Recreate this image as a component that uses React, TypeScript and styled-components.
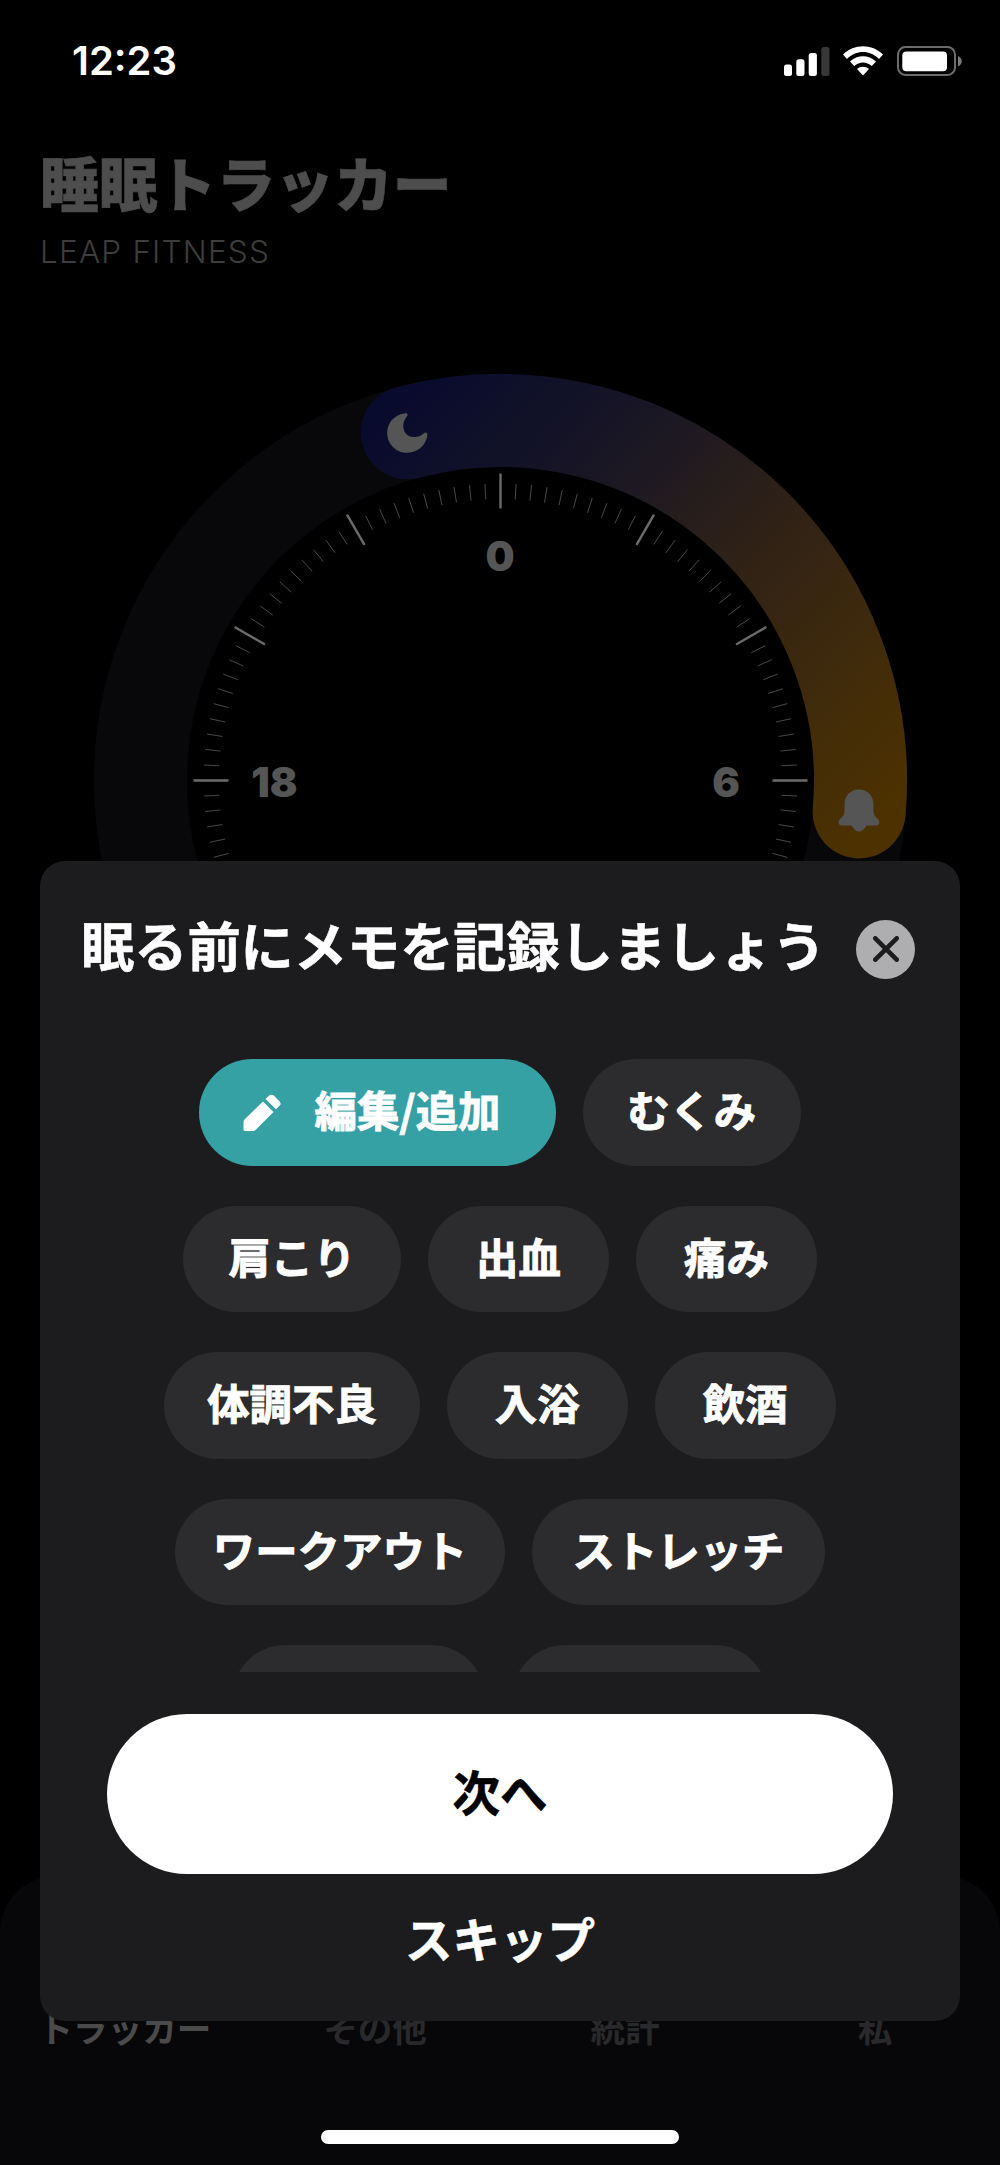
import React from "react";
import styled, { createGlobalStyle } from "styled-components";

const jp = `"Noto Sans CJK JP", "Noto Sans", sans-serif`;
const latin = `Inter, "Noto Sans", sans-serif`;

const GlobalStyle = createGlobalStyle`
  body { margin: 0; background: #000; }
  *, *::before, *::after { box-sizing: border-box; }
  button { border: 0; margin: 0; padding: 0; background: none; }
`;

const Screen = styled.div`
  position: relative;
  width: 1000px;
  height: 2165px;
  display: flex;
  flex-direction: column;
  background: #000;
  overflow: hidden;
  font-family: ${jp};
`;

const StatusBar = styled.header`
  display: flex;
  align-items: center;
  justify-content: space-between;
  height: 122px;
  padding: 0 38px 0 72px;
  flex: none;
`;

const Clock = styled.time`
  font: 600 40px/48px ${latin};
  color: #fff;
`;

const StatusIcons = styled.svg`
  display: block;
  width: 178px;
  height: 30px;
`;

const Heading = styled.div`
  display: flex;
  flex-direction: column;
  padding: 22px 40px 0;
  flex: none;
`;

const AppTitle = styled.h1`
  margin: 0;
  font-size: 58.8px;
  font-weight: 900;
  line-height: 76px;
  color: #4d4d4d;
  -webkit-text-stroke: 0.6px #4d4d4d;
`;

const Vendor = styled.p`
  margin: 12px 0 0;
  font: 300 31.5px/40px ${latin};
  letter-spacing: 1.2px;
  color: #3d3d3d;
`;

const Dial = styled.svg`
  display: block;
  flex: none;
  width: 1000px;
  height: 900px;
  margin-top: 78px;
  font: 900 41px ${latin};
`;

const TabBar = styled.nav`
  display: flex;
  align-items: flex-start;
  flex: none;
  margin-top: auto;
  height: 289px;
  padding-top: 126px;
  border-radius: 56px 56px 0 0;
  background: #070709;
`;

const Tab = styled.span<{ $active?: boolean }>`
  flex: 1;
  text-align: center;
  font-size: 34.6px;
  font-weight: 700;
  line-height: 50px;
  color: ${(p) => (p.$active ? "#4a4a4b" : "#29292b")};
`;

const Overlay = styled.div`
  position: absolute;
  inset: 0;
  display: flex;
  flex-direction: column;
  align-items: center;
  justify-content: flex-end;
  padding-bottom: 21px;
`;

const Sheet = styled.section`
  display: flex;
  flex-direction: column;
  width: 920px;
  height: 1160px;
  margin-bottom: 109px;
  border-radius: 25px;
  background: #1c1c1e;
`;

const SheetHeader = styled.div`
  display: flex;
  justify-content: space-between;
  align-items: center;
  height: 176px;
  padding: 0 45px 0 41px;
  flex: none;
`;

const SheetTitle = styled.h2`
  margin: 0;
  padding-bottom: 11px;
  font-size: 53.2px;
  font-weight: 700;
  line-height: 76px;
  white-space: nowrap;
  color: #fff;
  -webkit-text-stroke: 0.6px #fff;
`;

const CloseButton = styled.button`
  display: grid;
  place-items: center;
  width: 59px;
  height: 59px;
  border-radius: 50%;
  background: #aeaeb0;
`;

const TagList = styled.div`
  display: flex;
  flex-direction: column;
  gap: 40px;
  height: 635px;
  padding-top: 22px;
  overflow: hidden;
  flex: none;
`;

const TagRow = styled.div`
  display: flex;
  justify-content: center;
  gap: 27px;
`;

const Tag = styled.button<{ $width: number; $accent?: boolean }>`
  display: flex;
  align-items: center;
  justify-content: center;
  gap: 33px;
  flex: none;
  width: ${(p) => p.$width}px;
  height: 106.5px;
  padding: 0 ${(p) => (p.$accent ? 12 : 0)}px 6px 0;
  border-radius: 54px;
  background: ${(p) => (p.$accent ? "#36a1a5" : "#2c2c2e")};
  color: #fff;
  font: 700 42.4px/60px ${jp};
  white-space: nowrap;
  -webkit-text-stroke: 0.9px #fff;
`;

const PencilIcon = styled.svg`
  display: block;
  width: 39px;
  height: 38px;
  margin-top: 7px;
  stroke: none;
`;

const Actions = styled.div`
  display: flex;
  flex-direction: column;
  align-items: center;
  padding-top: 42px;
`;

const NextButton = styled.button`
  width: 786px;
  height: 160px;
  padding-bottom: 6px;
  border-radius: 80px;
  background: #fff;
  color: #000;
  font: 700 47.5px/70px ${jp};
  -webkit-text-stroke: 0.6px #000;
`;

const SkipButton = styled.button`
  margin-top: 29px;
  color: #fff;
  font: 700 47.5px/70px ${jp};
  -webkit-text-stroke: 0.6px #fff;
`;

const HomeIndicator = styled.div`
  flex: none;
  width: 358px;
  height: 14px;
  border-radius: 7px;
  background: #fff;
`;

const CX = 500.5;
const CY = 430.5;
const R = 360;

const polar = (deg: number, r: number) => {
  const a = (deg * Math.PI) / 180;
  return [CX + r * Math.sin(a), CY - r * Math.cos(a)];
};

function SleepDial() {
  const [x1, y1] = polar(-15, R);
  const [x2, y2] = polar(95, R);
  const ticks = Array.from({ length: 120 }, (_, i) => i * 3);
  return (
    <Dial viewBox="0 0 1000 900">
      <defs>
        <linearGradient id="sleep" gradientUnits="userSpaceOnUse" x1="390" y1="60" x2="860" y2="500">
          <stop offset="0" stopColor="#090b2e" />
          <stop offset="0.17" stopColor="#111128" />
          <stop offset="0.34" stopColor="#1c1823" />
          <stop offset="0.5" stopColor="#2b1f19" />
          <stop offset="0.75" stopColor="#3d290d" />
          <stop offset="1" stopColor="#4d3200" />
        </linearGradient>
      </defs>
      <circle cx={CX} cy={CY} r={R} fill="none" stroke="#08080a" strokeWidth="93" />
      <path
        d={`M${x1} ${y1}A${R} ${R} 0 0 1 ${x2} ${y2}`}
        fill="none"
        stroke="url(#sleep)"
        strokeWidth="93"
        strokeLinecap="round"
      />
      {ticks.map((deg) => {
        const major = deg % 30 === 0;
        const [ax, ay] = polar(deg, major ? 307 : 297);
        const [bx, by] = polar(deg, major ? 272 : 281.5);
        return (
          <line
            key={deg}
            x1={ax}
            y1={ay}
            x2={bx}
            y2={by}
            stroke={major ? "#6b6b6b" : "#484848"}
            strokeWidth={major ? 2.4 : 1}
          />
        );
      })}
      <g fill="#555" textAnchor="middle">
        <text x="500" y="221">0</text>
        <text x="274.500" y="446.500">18</text>
        <text x="726" y="446.500">6</text>
      </g>
      <path
        d="M404.500 63.500C407.500 62.500 408.500 65 406.500 67C400 75 404 87 413.500 87C418.500 87 421 86 423.500 83.500C426 81.500 428 82.500 427.300 86C425.500 96 417 102.800 407 102.800C396 102.800 387.200 94 387.200 83C387.200 73 394 65 404.500 63.500Z"
        fill="#555"
      />
      <path
        d="M844.500 455C844.500 445.500 850.500 439.500 859 439.500S873.500 445.500 873.500 455V460C873.500 464 874.500 466 877 468C880.500 471 880 475.500 876 475.500H866.500C864 479.500 862 481.500 859 481.500S854 479.500 851.500 475.500H842C838 475.500 837.500 471 841 468C843.500 466 844.500 464 844.500 460Z"
        fill="#555"
      />
    </Dial>
  );
}

function StatusGlyphs() {
  return (
    <StatusIcons viewBox="784 46 178 30" fill="#fff">
      <rect x="784" y="64.500" width="8" height="11.500" rx="2.500" />
      <rect x="796.300" y="59.200" width="8.200" height="16.800" rx="2.500" />
      <rect x="808.700" y="53" width="8.200" height="23" rx="2.500" />
      <rect x="821.300" y="47" width="8.200" height="29" rx="2.500" fill="#373737" />
      <path d="M843 54.500C854 43.500 872 43.500 883 54.500L879 59C870 49.800 856 49.800 847 59Z" />
      <path d="M850 61.500C857.500 54.500 868.500 54.500 876 61.500L871.800 66C866.500 61.300 859.500 61.300 854.200 66Z" />
      <path d="M857 69C860.500 66 865.500 66 869 69L863 75.500Z" />
      <rect x="898" y="47" width="57" height="28" rx="7.500" fill="none" stroke="#6c6c6c" strokeWidth="2" />
      <rect x="902.300" y="51.500" width="44.700" height="19.700" rx="4" />
      <path d="M958 56V66.500C963 64.500 963 58 958 56Z" fill="#7a7a7a" />
    </StatusIcons>
  );
}

const tagRows: { label: string; width: number }[][] = [
  [
    { label: "肩こり", width: 218 },
    { label: "出血", width: 181 },
    { label: "痛み", width: 181 },
  ],
  [
    { label: "体調不良", width: 255.5 },
    { label: "入浴", width: 181 },
    { label: "飲酒", width: 181 },
  ],
  [
    { label: "ワークアウト", width: 330 },
    { label: "ストレッチ", width: 293 },
  ],
  [
    { label: "", width: 252.5 },
    { label: "", width: 256 },
  ],
];

export default function App() {
  return (
    <>
      <GlobalStyle />
      <Screen>
        <StatusBar>
          <Clock>12:23</Clock>
          <StatusGlyphs />
        </StatusBar>
        <Heading>
          <AppTitle>睡眠トラッカー</AppTitle>
          <Vendor>LEAP FITNESS</Vendor>
        </Heading>
        <SleepDial />
        <TabBar>
          <Tab $active>トラッカー</Tab>
          <Tab>その他</Tab>
          <Tab>統計</Tab>
          <Tab>私</Tab>
        </TabBar>
        <Overlay>
          <Sheet>
            <SheetHeader>
              <SheetTitle>眠る前にメモを記録しましょう</SheetTitle>
              <CloseButton>
                <svg width="26" height="26" viewBox="0 0 26 26" stroke="#1c1c1e" strokeWidth="4.6" strokeLinecap="round">
                  <path d="M2.300 2.300L23.700 23.700M23.700 2.300L2.300 23.700" />
                </svg>
              </CloseButton>
            </SheetHeader>
            <TagList>
              <TagRow>
                <Tag $width={356.5} $accent>
                  <PencilIcon viewBox="0 0 39 38" fill="#fff">
                    <path d="M20 7.500L30.500 18L12.500 36Q11.500 37 10 37H2.500Q0.500 37 0.500 35.500V28Q0.500 26.500 1.500 25.500Z" />
                    <path d="M22.500 5L26.500 1.300Q28.500 0 30.500 1.300L36.700 7.500Q38.500 9.500 36.700 11.500L33 15.300Z" />
                  </PencilIcon>
                  編集/追加
                </Tag>
                <Tag $width={218}>むくみ</Tag>
              </TagRow>
              {tagRows.map((row, i) => (
                <TagRow key={i}>
                  {row.map((tag, j) => (
                    <Tag key={j} $width={tag.width}>
                      {tag.label}
                    </Tag>
                  ))}
                </TagRow>
              ))}
            </TagList>
            <Actions>
              <NextButton>次へ</NextButton>
              <SkipButton>スキップ</SkipButton>
            </Actions>
          </Sheet>
          <HomeIndicator />
        </Overlay>
      </Screen>
    </>
  );
}
